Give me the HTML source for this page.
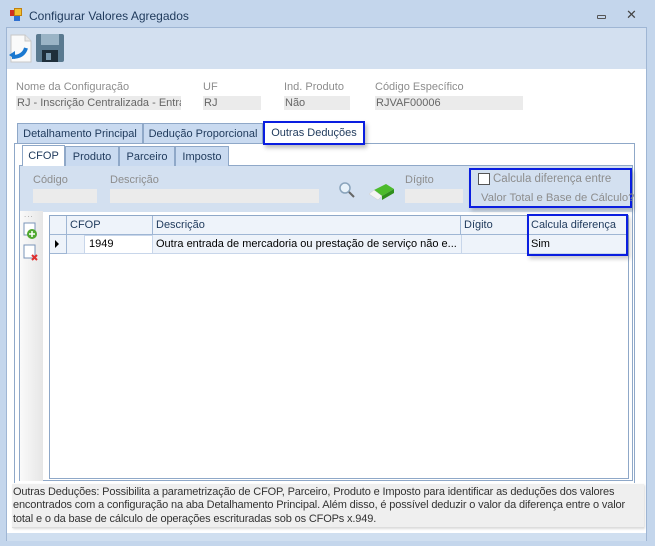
<!DOCTYPE html>
<html><head><meta charset="utf-8"><style>
*{box-sizing:border-box;margin:0;padding:0}
body{width:655px;height:546px;background:#c4d6ec;font-family:"Liberation Sans",sans-serif;font-size:11px;color:#1e395b;position:relative;overflow:hidden;white-space:nowrap}
.a{position:absolute}
.lbl{color:#8d8d8d;font-size:11px}
.val{background:#ebebeb;color:#666;height:14px;line-height:14px;padding-left:1px;overflow:hidden}
.tab{position:absolute;background:#c9daf0;border:1px solid #8fa8c8;border-bottom:none;color:#1e395b;text-align:center;line-height:20px;font-size:11px}
.gh{position:absolute;top:0;height:19px;line-height:19px;border-right:1px solid #9fb6d4;padding-left:3px;color:#1e395b}
</style></head><body>
<div class="a" style="left:10px;top:10px;width:6px;height:6px;background:#d03020"></div>
<div class="a" style="left:14px;top:8px;width:8px;height:8px;background:#f2c030;border:1px solid #c08010"></div>
<div class="a" style="left:14px;top:16px;width:6px;height:5px;background:#3070d0"></div>
<div class="a" style="left:29px;top:9px;font-size:12px;color:#1e395b">Configurar Valores Agregados</div>
<div class="a" style="left:597px;top:15px;width:9px;height:4px;border:1px solid #555;border-radius:1px"></div>
<div class="a" style="left:626px;top:7px;font-size:13px;color:#444">✕</div>
<div class="a" style="left:6px;top:27px;width:641px;height:514px;background:#fff;border:1px solid #9fb6d4"></div>
<div class="a" style="left:7px;top:28px;width:639px;height:41px;background:#d3e0f0"></div>
<svg class="a" style="left:8px;top:32px" width="60" height="32">
<path d="M3 3h14l6 6v21H3z" fill="#fafafa" stroke="#c8c8c8"/><path d="M17 3v6h6" fill="#e8e8e8" stroke="#c8c8c8"/>
<path d="M4 25c6 0 12-2 14-9" stroke="#1a78d0" stroke-width="4" fill="none"/><path d="M1 23l6-4v8z" fill="#1a78d0"/>
<rect x="28" y="2" width="28" height="28" rx="2" fill="#5a7a90"/><rect x="33" y="2" width="18" height="11" fill="#9ab4c6"/><rect x="34" y="18" width="16" height="12" fill="#1e2e3a"/><rect x="38" y="21" width="5" height="7" fill="#7a9ab0"/>
</svg>
<div class="a lbl" style="left:16px;top:81px">Nome da Configuração</div>
<div class="a lbl" style="left:203px;top:81px">UF</div>
<div class="a lbl" style="left:284px;top:81px">Ind. Produto</div>
<div class="a lbl" style="left:375px;top:81px">Código Específico</div>
<div class="a val" style="left:16px;top:96px;width:165px">RJ - Inscrição Centralizada - Entra</div>
<div class="a val" style="left:203px;top:96px;width:58px">RJ</div>
<div class="a val" style="left:284px;top:96px;width:66px">Não</div>
<div class="a val" style="left:375px;top:96px;width:148px">RJVAF00006</div>
<div class="tab" style="left:17px;top:123px;width:126px;height:21px">Detalhamento Principal</div>
<div class="tab" style="left:143px;top:123px;width:120px;height:21px">Dedução Proporcional</div>
<div class="a" style="left:14px;top:143px;width:621px;height:340px;border:1px solid #8fa8c8;border-bottom:none;background:#fff"></div>
<div class="a" style="left:263px;top:121px;width:102px;height:24px;background:#fff;border:2px solid #0a1ee0;box-shadow:2px 3px 4px rgba(0,0,0,.25);text-align:center;line-height:21px;color:#1e395b">Outras Deduções</div>
<div class="a" style="left:19px;top:165px;width:614px;height:316px;border:1px solid #8fa8c8;background:#fff"></div>
<div class="tab" style="left:65px;top:146px;width:54px;height:20px">Produto</div>
<div class="tab" style="left:119px;top:146px;width:56px;height:20px">Parceiro</div>
<div class="tab" style="left:175px;top:146px;width:54px;height:20px">Imposto</div>
<div class="a" style="left:22px;top:145px;width:43px;height:21px;background:#fff;border:1px solid #8fa8c8;border-bottom:none;text-align:center;line-height:20px">CFOP</div>
<div class="a" style="left:20px;top:166px;width:612px;height:46px;background:#d3e0f0"></div>
<div class="a lbl" style="left:33px;top:174px">Código</div>
<div class="a lbl" style="left:110px;top:174px">Descrição</div>
<div class="a lbl" style="left:405px;top:174px">Dígito</div>
<div class="a" style="left:33px;top:189px;width:64px;height:14px;background:#ebebeb"></div>
<div class="a" style="left:110px;top:189px;width:209px;height:14px;background:#ebebeb"></div>
<div class="a" style="left:405px;top:189px;width:58px;height:14px;background:#ebebeb"></div>
<svg class="a" style="left:336px;top:180px" width="60" height="22">
<circle cx="9" cy="8" r="5" fill="#e8f2fa" stroke="#8aa4bc" stroke-width="1.5"/><path d="M13 12l5 5" stroke="#666" stroke-width="2"/>
<path d="M38 10l12-6 8 5-12 7z" fill="#4cbb2c"/><path d="M46 16l12-7v4l-12 7z" fill="#2f8f1c"/><path d="M33 14l5-4 8 6-4 4z" fill="#f4f4f4" stroke="#ccc" stroke-width=".5"/>
</svg>
<div class="a" style="left:469px;top:168px;width:163px;height:40px;border:2px solid #0a1ee0;box-shadow:2px 3px 4px rgba(0,0,0,.2)"></div>
<div class="a" style="left:478px;top:173px;width:12px;height:12px;border:1px solid #555;background:#fff"></div>
<div class="a lbl" style="left:493px;top:173px;font-size:11.5px">Calcula diferença entre</div>
<div class="a lbl" style="left:481px;top:192px;font-size:11.3px">Valor Total e Base de Cálculo?</div>
<div class="a" style="left:20px;top:211px;width:23px;height:270px;background:linear-gradient(to right,#fafafa,#e6e6e6)"></div>
<div class="a" style="left:24px;top:210px;font-size:8px;color:#999;letter-spacing:1px">...</div>
<svg class="a" style="left:22px;top:222px" width="20" height="42">
<rect x="2" y="1" width="11" height="12" fill="#fff" stroke="#7a94b8"/><circle cx="10" cy="12" r="5" fill="#50a830"/><path d="M7 12h6M10 9v6" stroke="#fff" stroke-width="1.5"/>
<rect x="2" y="23" width="11" height="13" fill="#fff" stroke="#7a94b8"/><path d="M10 33l5 5M15 33l-5 5" stroke="#e03030" stroke-width="2"/>
</svg>
<div class="a" style="left:49px;top:215px;width:580px;height:264px;border:1px solid #8fa8c8;background:#fff">
 <div class="a" style="left:0;top:0;width:578px;height:19px;background:#eef3fa;border-bottom:1px solid #9fb6d4"></div>
 <div class="gh" style="left:0;width:17px"></div>
 <div class="gh" style="left:17px;width:86px">CFOP</div>
 <div class="gh" style="left:103px;width:308px">Descrição</div>
 <div class="gh" style="left:411px;width:67px">Dígito</div>
 <div class="gh" style="left:478px;width:100px;border:none">Calcula diferença</div>
 <div class="a" style="left:0;top:19px;width:17px;height:19px;border-right:1px solid #9fb6d4;border-bottom:1px solid #9fb6d4;background:#eef3fa"></div>
 <div class="a" style="left:5px;top:24px;width:0;height:0;border-left:4px solid #000;border-top:4px solid transparent;border-bottom:4px solid transparent"></div>
 <div class="a" style="left:17px;top:19px;width:561px;height:19px;background:#eef3fa;border-bottom:1px solid #c8d6ea"></div>
 <div class="a" style="left:34px;top:19px;width:69px;height:19px;background:#fff;border:1px solid #c8d6ea;padding-left:4px;line-height:17px;color:#000">1949</div>
 <div class="a" style="left:106px;top:19px;line-height:19px;color:#000">Outra entrada de mercadoria ou prestação de serviço não e...</div>
 <div class="a" style="left:411px;top:19px;width:1px;height:19px;background:#c8d6ea"></div>
 <div class="a" style="left:478px;top:19px;width:1px;height:19px;background:#c8d6ea"></div>
 <div class="a" style="left:481px;top:19px;line-height:19px;color:#000">Sim</div>
</div>
<div class="a" style="left:527px;top:214px;width:101px;height:42px;border:2px solid #0a1ee0;box-shadow:2px 3px 4px rgba(0,0,0,.2)"></div>
<div class="a" style="left:12px;top:484px;width:632px;height:44px;background:#efefef;border-bottom:1px solid #ddd;box-shadow:1px 1px 2px rgba(0,0,0,.15);padding:2px 0 0 1px;font-size:11px;line-height:13.3px;color:#333;letter-spacing:-0.15px;overflow:hidden">Outras Deduções: Possibilita a parametrização de CFOP, Parceiro, Produto e Imposto para identificar as deduções dos valores<br>encontrados com a configuração na aba Detalhamento Principal. Além disso, é possível deduzir o valor da diferença entre o valor<br>total e o da base de cálculo de operações escrituradas sob os CFOPs x.949.</div>
<div class="a" style="left:7px;top:533px;width:639px;height:8px;background:#d0dff0"></div>
</body></html>
